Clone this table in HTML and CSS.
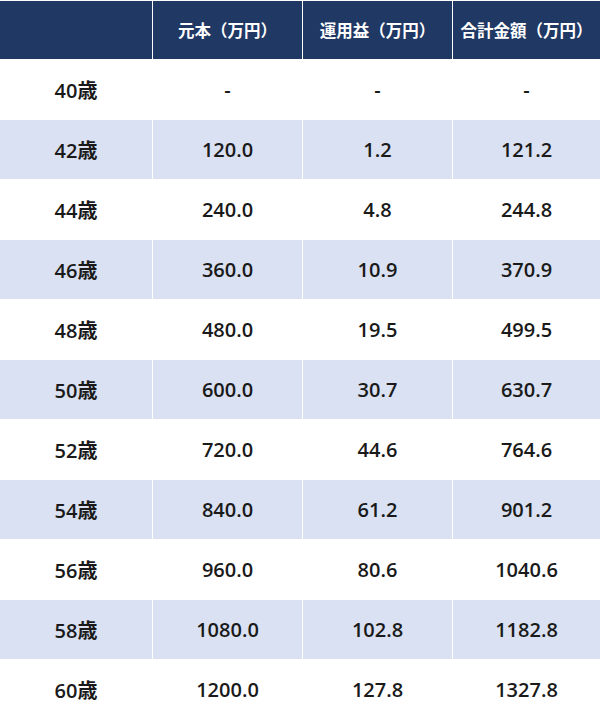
FILE: index.html
```html
<!DOCTYPE html>
<html lang="ja">
<head>
<meta charset="utf-8">
<link rel="stylesheet" href="styles.css">
</head>
<body>
<table class="sim">
  <colgroup>
    <col class="c-age"><col class="c-val"><col class="c-val"><col class="c-last">
  </colgroup>
  <thead>
    <tr><th></th><th>元本（万円）</th><th>運用益（万円）</th><th>合計金額（万円）</th></tr>
  </thead>
  <tbody>
    <tr><td>40歳</td><td>-</td><td>-</td><td>-</td></tr>
    <tr class="band"><td>42歳</td><td>120.0</td><td>1.2</td><td>121.2</td></tr>
    <tr><td>44歳</td><td>240.0</td><td>4.8</td><td>244.8</td></tr>
    <tr class="band"><td>46歳</td><td>360.0</td><td>10.9</td><td>370.9</td></tr>
    <tr><td>48歳</td><td>480.0</td><td>19.5</td><td>499.5</td></tr>
    <tr class="band"><td>50歳</td><td>600.0</td><td>30.7</td><td>630.7</td></tr>
    <tr><td>52歳</td><td>720.0</td><td>44.6</td><td>764.6</td></tr>
    <tr class="band"><td>54歳</td><td>840.0</td><td>61.2</td><td>901.2</td></tr>
    <tr><td>56歳</td><td>960.0</td><td>80.6</td><td>1040.6</td></tr>
    <tr class="band"><td>58歳</td><td>1080.0</td><td>102.8</td><td>1182.8</td></tr>
    <tr><td>60歳</td><td>1200.0</td><td>127.8</td><td>1327.8</td></tr>
  </tbody>
</table>
</body>
</html>
```
FILE: styles.css
```css
html, body {
  margin: 0;
  padding: 0;
  background: #ffffff;
}
.sim {
  width: 600px;
  table-layout: fixed;
  border-collapse: separate;
  border-spacing: 0;
  font-family: "Open Sans", "Noto Sans CJK JP", sans-serif;
  margin-top: 1px;
}
.c-age { width: 153px; }
.c-val { width: 150px; }
.c-last { width: 147px; }
.sim th, .sim td {
  padding: 0;
  text-align: center;
  vertical-align: middle;
  border-right: 1px solid #ffffff;
  border-bottom: 1px solid #ffffff;
  box-sizing: border-box;
}
.sim th:last-child, .sim td:last-child { border-right: none; }
.sim th {
  background: #203864;
  color: #ffffff;
  font-family: "Noto Sans CJK JP", sans-serif;
  font-size: 16.5px;
  font-weight: 700;
  height: 59px;
}
.sim td {
  font-size: 20px;
  font-weight: 600;
  color: #1a1a1a;
  height: 60px;
}
.sim tr.band td { background: #d9e1f2; }
```
